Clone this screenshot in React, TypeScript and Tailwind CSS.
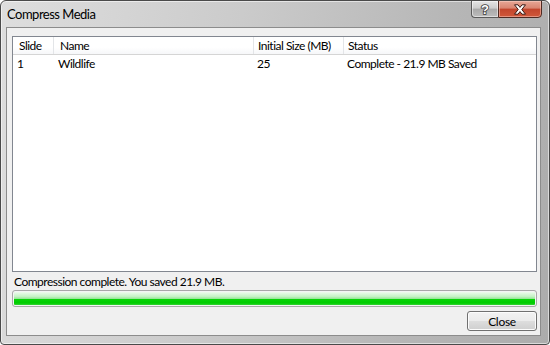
import React from "react";

const font = { fontFamily: 'Lato, "Noto Sans", sans-serif' };

function HelpGlyph() {
  return (
    <svg width="10" height="13" viewBox="0 0 10 13">
      <text
        x="5"
        y="11"
        textAnchor="middle"
        fontFamily="Liberation Sans, sans-serif"
        fontWeight="700"
        fontSize="13"
        fill="#ffffff"
        stroke="#3a3a3a"
        strokeWidth="1.6"
        paintOrder="stroke"
      >
        ?
      </text>
    </svg>
  );
}

function CloseGlyph() {
  return (
    <svg width="14" height="11" viewBox="0 0 14 11">
      <path
        d="M1.5 0.8 H5 L7 3.4 L9 0.8 H12.5 L8.8 5.5 L12.5 10.2 H9 L7 7.6 L5 10.2 H1.5 L5.2 5.5 Z"
        fill="#ffffff"
        stroke="#3b1a14"
        strokeWidth="1"
        strokeLinejoin="round"
      />
    </svg>
  );
}

export default function App() {
  return (
    <div
      className="w-[550px] h-[345px] flex flex-col rounded-t-[6px] rounded-b-[4px] border border-[#4a4a4a] bg-[linear-gradient(100deg,#dedede_0%,#cbcbcb_40%,#b6b6b6_75%,#acacac_100%)] shadow-[inset_0_0_0_1px_rgba(255,255,255,0.55)] overflow-hidden"
      style={font}
    >
      {/* Title bar */}
      <div className="h-[26px] flex items-start shrink-0">
        <div className="pl-[6px] pt-[5px] text-[13px] leading-[16px] tracking-[-0.5px] text-black whitespace-nowrap">
          Compress Media
        </div>
        <div className="ml-auto mr-[7px] flex -mt-px">
          <div className="w-[27px] h-[18px] flex items-center justify-center rounded-bl-[4px] border border-[#5a5a5a] border-r-0 bg-[linear-gradient(180deg,#e4e4e4_0%,#cdcdcd_45%,#a9a9a9_50%,#bdbdbd_100%)] shadow-[inset_0_0_0_1px_rgba(255,255,255,0.5)]">
            <HelpGlyph />
          </div>
          <div className="w-[44px] h-[18px] flex items-center justify-center rounded-br-[4px] border border-[#4f2a22] bg-[linear-gradient(180deg,#e7a796_0%,#d98470_45%,#c2452c_50%,#d0583a_100%)] shadow-[inset_0_0_0_1px_rgba(255,220,210,0.45)]">
            <CloseGlyph />
          </div>
        </div>
      </div>

      {/* Client area */}
      <div className="flex-1 ml-[5px] mr-[8px] mb-[8px] border border-[#8c8c8c] bg-[#f0f0f0] flex flex-col pl-[5px] pr-[3px] pt-[8px] text-[12px] tracking-[-0.5px] text-black whitespace-nowrap">
        {/* List view */}
        <div className="h-[236px] border border-[#828790] bg-white flex flex-col">
          <div className="h-[18px] flex border-b border-[#d5d5d5] bg-[linear-gradient(180deg,#ffffff_0%,#ffffff_60%,#f6f7f9_100%)] leading-[17px]">
            <div className="w-[41px] pl-[6px] border-r border-[#e3e5e8]">Slide</div>
            <div className="w-[200px] pl-[6px] border-r border-[#e3e5e8]">Name</div>
            <div className="w-[90px] pl-[4px] border-r border-[#e3e5e8] overflow-hidden">Initial Size (MB)</div>
            <div className="flex-1 pl-[4px]">Status</div>
          </div>
          <div className="h-[17px] flex leading-[17px]">
            <div className="w-[41px] pl-[4px]">1</div>
            <div className="w-[200px] pl-[4px]">Wildlife</div>
            <div className="w-[90px] pl-[3px]">25</div>
            <div className="flex-1 pl-[3px]">Complete - 21.9 MB Saved</div>
          </div>
        </div>

        <div className="h-[17px] leading-[17px] pl-[2px] mt-[1px]">
          Compression complete. You saved 21.9 MB.
        </div>

        {/* Progress bar */}
        <div className="h-[17px] rounded-[3px] border border-[#a8a8a8] bg-[#e8e8e8] p-px shadow-[inset_0_0_0_1px_#f4f4f4]">
          <div className="h-full w-full rounded-[1px] bg-[linear-gradient(180deg,#eefbee_0%,#c4f2c4_35%,#9be69b_50%,#08d408_55%,#00cc00_85%,#35d435_100%)]" />
        </div>

        {/* Button row */}
        <div className="flex justify-end mt-[4px]">
          <button className="w-[70px] h-[20px] rounded-[3px] border border-[#707070] bg-[linear-gradient(180deg,#f2f2f2_0%,#ebebeb_48%,#dddddd_52%,#cfcfcf_100%)] shadow-[inset_0_0_0_1px_#fcfcfc] text-[12px] leading-[17px] tracking-[-0.3px] text-black">
            Close
          </button>
        </div>
      </div>
    </div>
  );
}
